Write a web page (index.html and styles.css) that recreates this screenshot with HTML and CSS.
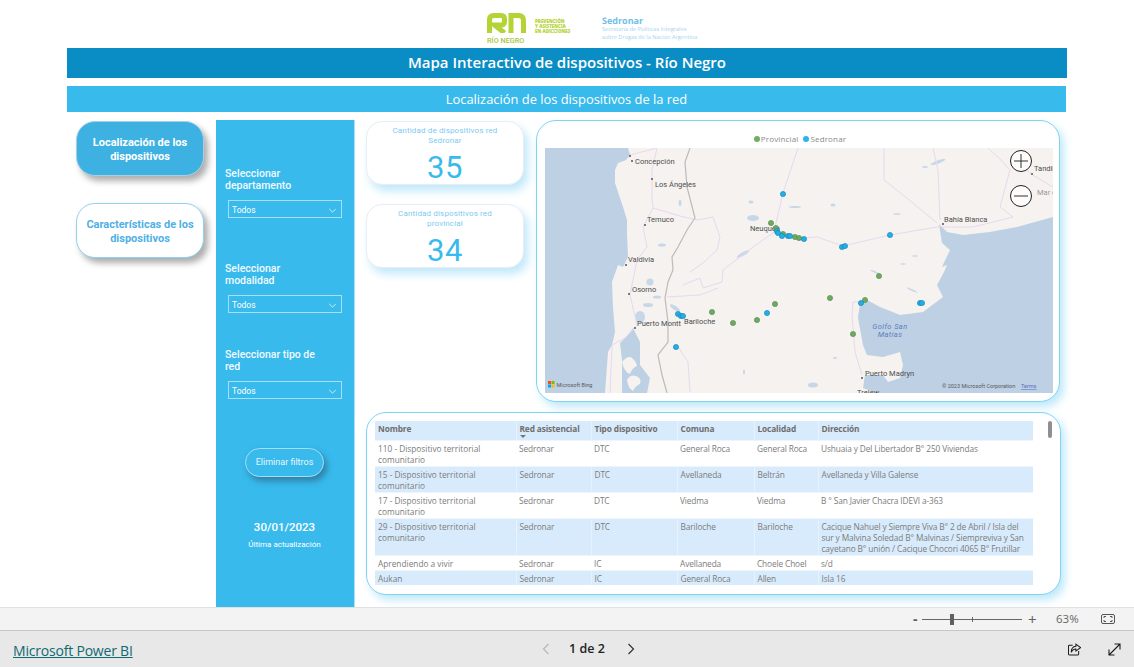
FILE: index.html
```html
<!DOCTYPE html>
<html lang="es">
<head>
<meta charset="utf-8">
<title>Mapa Interactivo de dispositivos - Río Negro</title>
<link rel="stylesheet" href="styles.css">
</head>
<body>
<main class="canvas">
  <header class="logos">
    <div class="rn">
      <svg class="rn-mark" viewBox="0 0 39 20" aria-hidden="true">
        <path d="M2.500 20V7Q2.500 2.500 7 2.500H14Q17.500 2.500 17.500 6V8.500Q17.500 12 14 12H7.500L17.500 20"/>
        <path d="M24 20V2.500H31.500Q36.500 2.500 36.500 7.500V20"/>
      </svg>
      <span class="rn-name">RÍO NEGRO</span>
    </div>
    <div class="rn-tag">PREVENCIÓN<br>Y ASISTENCIA<br>EN ADICCIONES</div>
    <div class="sedronar">
      <strong>Sedronar</strong>
      <span>Secretaría de Políticas Integrales</span>
      <span>sobre Drogas de la Nación Argentina</span>
    </div>
  </header>
  <h1 class="title">Mapa Interactivo de dispositivos - Río Negro</h1>
  <h2 class="subtitle">Localización de los dispositivos de la red</h2>

  <div class="report">
    <nav class="nav">
      <a class="nav-btn active">Localización de los dispositivos</a>
      <a class="nav-btn">Características de los dispositivos</a>
    </nav>

    <aside class="filters">
      <div class="filter">
        <label>Seleccionar<br>departamento</label>
        <div class="select"><span>Todos</span><svg viewBox="0 0 10 6"><path d="M1 1l4 4 4-4"/></svg></div>
      </div>
      <div class="filter">
        <label>Seleccionar<br>modalidad</label>
        <div class="select"><span>Todos</span><svg viewBox="0 0 10 6"><path d="M1 1l4 4 4-4"/></svg></div>
      </div>
      <div class="filter">
        <label>Seleccionar tipo de<br>red</label>
        <div class="select"><span>Todos</span><svg viewBox="0 0 10 6"><path d="M1 1l4 4 4-4"/></svg></div>
      </div>
      <button class="clear">Eliminar filtros</button>
      <div class="date">30/01/2023</div>
      <div class="date-note">Última actualización</div>
    </aside>

    <section class="main">
      <div class="top">
        <div class="kpis">
          <div class="kpi"><p>Cantidad de dispositivos red<br>Sedronar</p><b>35</b></div>
          <div class="kpi"><p>Cantidad dispositivos red<br>provincial</p><b>34</b></div>
        </div>
        <div class="map-card">
          <div class="legend">
            <i class="dot green"></i><span>Provincial</span>
            <i class="dot blue"></i><span>Sedronar</span>
          </div>
          <div class="map">
            <svg class="map-svg" viewBox="545 148 508 245" aria-label="Mapa">
              <rect class="land" x="545" y="148" width="508" height="245"/>
              <path class="sea" d="M545 148H628L630 155L626 160L618 163L615 170L615 183L619 195L623 207L627 220L627 233L628 257L623 267L618 265L612 282L613 308L615 332L612 345L608 352L605 393H545Z"/>
              <path class="sea" d="M633 328L640 342L640 365L650 378L647 393H622L622 360L620 343L628 335Z"/>
              <path class="sea" d="M1053 217L1017 227L990 232L963 235L947 232L942 227L939 224L942 243L950 250L942 267L947 265L944 272L937 285L943 297L923 312L900 315L880 307L867 300L860 303L858 318L863 345L867 355L883 357L900 352L903 365L900 378L888 382L883 375L865 375L863 388L877 393H1053Z"/>
              <path class="land" d="M872 360Q880 356 890 358L888 364L876 366Z"/>
              <g class="land">
                <path d="M622 362Q628 355 632 358T637 366Q632 368 630 374Q624 372 622 362Z"/>
                <path d="M627 380Q630 374 636 376T640 384Q635 386 633 391Q628 388 627 380Z"/>
                <path d="M612 348L620 345L621 393H608Z"/>
              </g>
              <g class="lakes">
                <ellipse cx="753" cy="218" rx="6" ry="3"/><ellipse cx="751" cy="202" rx="2.500" ry="1.500"/>
                <ellipse cx="795" cy="207" rx="6" ry="1"/><ellipse cx="743" cy="254" rx="7" ry="1.800" transform="rotate(-30 743 254)"/>
                <ellipse cx="650" cy="282" rx="3.500" ry="3.500"/><ellipse cx="657" cy="297" rx="4" ry="1.500"/>
                <ellipse cx="648" cy="305" rx="5" ry="2"/><ellipse cx="675" cy="308" rx="6" ry="2" transform="rotate(35 675 308)"/>
                <ellipse cx="640" cy="317" rx="5" ry="6"/><ellipse cx="662" cy="245" rx="4" ry="1.500"/>
                <ellipse cx="680" cy="203" rx="1.500" ry="3"/><ellipse cx="938" cy="162" rx="8" ry="1.500" transform="rotate(-20 938 162)"/>
                <ellipse cx="925" cy="167" rx="3" ry="1"/><ellipse cx="833" cy="205" rx="2.500" ry="1.500"/>
                <ellipse cx="897" cy="214" rx="4" ry=".8"/><ellipse cx="915" cy="256" rx="3" ry=".8"/>
                <ellipse cx="903" cy="264" rx="3" ry=".8"/><ellipse cx="835" cy="358" rx="2" ry="1"/>
                <ellipse cx="813" cy="385" rx="5" ry="2.500"/><ellipse cx="912" cy="290" rx="6" ry=".8" transform="rotate(25 912 290)"/>
                <ellipse cx="875" cy="272" rx="5" ry=".8" transform="rotate(25 875 272)"/><ellipse cx="744" cy="372" rx="1" ry="2.500"/>
              </g>
              <g class="roads">
                <path d="M630 155L657 148M657 148L652 170L652 197L653 208L643 227L647 247L637 260L630 295L637 325L625 338L612 345L610 393"/>
                <path d="M653 208L680 216L697 220L713 217L720 237L717 250L703 263L690 272"/>
                <path d="M798 148L783 193L775 227L773 233L753 247L740 257L723 270L722 282L703 288L700 278L683 285"/>
                <path d="M667 297L700 295L718 288M677 345L688 362L690 392"/>
                <path d="M773 233L800 238L817 237L843 246L890 235L937 227L973 227L1013 217L1000 207L1010 170L1000 159L988 148"/>
                <path d="M933 148L938 170L940 220M884 148V180L913 203L937 223M1010 157L1033 175L1053 187M853 302L852 315L855 352L862 375M853 302H863"/>
              </g>
              <path class="border" d="M690 148L685 162L687 187L695 218L687 230L678 247L672 257L673 270L668 282L665 298L668 322L668 342L658 355L662 375L667 393"/>
              <g class="labels">
                <text x="635" y="164">Concepción</text><text x="655" y="187">Los Ángeles</text>
                <text x="647" y="222">Temuco</text><text x="628" y="262">Valdivia</text>
                <text x="750" y="231">Neuquén</text><text x="944" y="222">Bahía Blanca</text>
                <text x="1034" y="171">Tandil</text><text class="faint" x="1037" y="195">Mar d</text>
                <text x="632" y="292">Osorno</text><text x="637" y="326">Puerto Montt</text>
                <text x="684" y="324">Bariloche</text><text x="865" y="376">Puerto Madryn</text>
                <text x="857" y="395">Trelew</text>
                <text class="gulf" x="890" y="329">Golfo San</text><text class="gulf" x="890" y="337">Matías</text>
              </g>
              <g class="towns">
                <circle cx="630" cy="156" r="1"/><circle cx="632" cy="161" r="1"/><circle cx="652" cy="179" r="1"/>
                <circle cx="645" cy="225" r="1"/><circle cx="626" cy="265" r="1"/><circle cx="629" cy="294" r="1"/>
                <circle cx="635" cy="328" r="1"/><circle cx="1032" cy="174" r="1"/><circle cx="943" cy="224" r="1"/>
                <circle cx="862" cy="378" r="1"/>
              </g>
              <g class="pins-green">
                <circle cx="771" cy="223" r="2.600"/><circle cx="776" cy="228" r="2.600"/><circle cx="783" cy="234" r="2.600"/>
                <circle cx="795" cy="237" r="2.600"/><circle cx="799" cy="238" r="2.600"/><circle cx="712" cy="312" r="2.600"/>
                <circle cx="733" cy="323" r="2.600"/><circle cx="757" cy="320" r="2.600"/><circle cx="775" cy="304" r="2.600"/>
                <circle cx="879" cy="276" r="2.600"/><circle cx="830" cy="298" r="2.600"/><circle cx="865" cy="300" r="2.600"/>
                <circle cx="853" cy="334" r="2.600"/>
              </g>
              <g class="pins-blue">
                <circle cx="783" cy="194" r="2.600"/><circle cx="777" cy="231" r="2.600"/><circle cx="778" cy="233" r="2.600"/>
                <circle cx="782" cy="236" r="2.600"/><circle cx="788" cy="236" r="2.600"/><circle cx="790" cy="236" r="2.600"/>
                <circle cx="804" cy="239" r="2.600"/><circle cx="842" cy="247" r="2.600"/><circle cx="845" cy="246" r="2.600"/>
                <circle cx="890" cy="235" r="2.600"/><circle cx="678" cy="314" r="2.600"/><circle cx="681" cy="316" r="2.600"/>
                <circle cx="683" cy="316" r="2.600"/><circle cx="767" cy="313" r="2.600"/><circle cx="676" cy="347" r="2.600"/>
                <circle cx="861" cy="303" r="2.600"/><circle cx="920" cy="303" r="2.600"/><circle cx="922" cy="303" r="2.600"/>
              </g>
              <g class="zoom-btn">
                <circle cx="1021" cy="161" r="10.500"/><path d="M1014 161H1028M1021 154V168"/>
                <circle cx="1021" cy="196" r="10.500"/><path d="M1014 196H1028"/>
              </g>
              <g>
                <rect x="548" y="381" width="3" height="3" fill="#f25022"/><rect x="551.500" y="381" width="3" height="3" fill="#7fba00"/>
                <rect x="548" y="384.500" width="3" height="3" fill="#00a4ef"/><rect x="551.500" y="384.500" width="3" height="3" fill="#ffb900"/>
                <text class="credit" x="556.500" y="387">Microsoft Bing</text>
                <text class="credit" x="942" y="388">© 2023 Microsoft Corporation</text>
                <text class="credit terms" x="1021" y="388">Terms</text>
              </g>
            </svg>
          </div>
        </div>
      </div>

      <div class="table-card">
        <table class="devices">
          <colgroup>
            <col class="c1"><col class="c2"><col class="c3"><col class="c4"><col class="c5"><col class="c6">
          </colgroup>
          <thead>
            <tr>
              <th>Nombre</th>
              <th class="sorted">Red asistencial</th>
              <th>Tipo dispositivo</th>
              <th>Comuna</th>
              <th>Localidad</th>
              <th>Dirección</th>
            </tr>
          </thead>
          <tbody>
            <tr><td>110 - Dispositivo territorial comunitario</td><td>Sedronar</td><td>DTC</td><td>General Roca</td><td>General Roca</td><td>Ushuaia y Del Libertador B° 250 Viviendas</td></tr>
            <tr><td>15 - Dispositivo territorial comunitario</td><td>Sedronar</td><td>DTC</td><td>Avellaneda</td><td>Beltrán</td><td>Avellaneda y Villa Galense</td></tr>
            <tr><td>17 - Dispositivo territorial comunitario</td><td>Sedronar</td><td>DTC</td><td>Viedma</td><td>Viedma</td><td>B ° San Javier Chacra IDEVI a-363</td></tr>
            <tr><td>29 - Dispositivo territorial comunitario</td><td>Sedronar</td><td>DTC</td><td>Bariloche</td><td>Bariloche</td><td>Cacique Nahuel y Siempre Viva B° 2 de Abril / Isla del sur y Malvina Soledad B° Malvinas / Siempreviva y San cayetano B° unión / Cacique Chocori 4065 B° Frutillar</td></tr>
            <tr><td>Aprendiendo a vivir</td><td>Sedronar</td><td>IC</td><td>Avellaneda</td><td>Choele Choel</td><td>s/d</td></tr>
            <tr><td>Aukan</td><td>Sedronar</td><td>IC</td><td>General Roca</td><td>Allen</td><td>Isla 16</td></tr>
          </tbody>
        </table>
        <div class="scrollbar"></div>
      </div>
    </section>
  </div>
</main>

<div class="zoombar">
  <span class="z-minus">-</span>
  <div class="slider"><i class="tick"></i><i class="thumb"></i></div>
  <span class="z-plus">+</span>
  <span class="z-pct">63%</span>
  <svg class="z-fit" viewBox="0 0 14 10" aria-hidden="true">
    <rect x="0.500" y="0.500" width="13" height="9" rx="1.500"/>
    <path d="M3 4V2.500H5M9 2.500H11V4M11 6V7.500H9M5 7.500H3V6"/>
  </svg>
</div>

<footer class="footer">
  <a class="pbi">Microsoft Power BI</a>
  <div class="pager">
    <svg class="chev off" viewBox="0 0 8 12"><path d="M6.500 1L1.500 6L6.500 11"/></svg>
    <span>1 de 2</span>
    <svg class="chev" viewBox="0 0 8 12"><path d="M1.500 1L6.500 6L1.500 11"/></svg>
  </div>
  <div class="foot-icons">
    <svg class="ficon share" viewBox="0 0 14 13" aria-hidden="true">
      <path d="M5 2H1.500Q.5 2 .5 3V11Q.5 12.500 2 12.500H10Q11.500 12.500 11.500 11V8"/>
      <path d="M8.500 .8L13.500 4.500L8.500 8.200V6Q5 6 3.500 9.500Q3.500 3.500 8.500 3Z"/>
    </svg>
    <svg class="ficon expand" viewBox="0 0 13 13" aria-hidden="true">
      <path d="M1 12L12 1M6.500 1H12V6.500M1 6.500V12H6.500"/>
    </svg>
  </div>
</footer>
</body>
</html>
```
FILE: styles.css
```css
* { box-sizing: border-box; }
html, body { margin: 0; padding: 0; }
body {
  width: 1134px;
  height: 667px;
  overflow: hidden;
  background: #fff;
  font-family: "Open Sans", "Noto Sans", sans-serif;
  display: flex;
  flex-direction: column;
}

/* Report canvas */
.canvas { height: 607px; flex: none; overflow: hidden; background: #fff; }

.logos { height: 48px; padding-left: 487px; display: flex; align-items: flex-start; }
.rn { width: 39px; margin-top: 13px; display: flex; flex-direction: column; }
.rn-mark { width: 39px; height: 20px; display: block; }
.rn-mark path { fill: none; stroke: #b4d335; stroke-width: 5; }
.rn-name { margin-top: 4px; font: 500 7.300px/8px "Roboto", sans-serif; color: #a8c640; white-space: nowrap; }
.rn-tag { margin: 19px 0 0 9px; width: 67px; font: 800 4.500px/5px "Open Sans", sans-serif; color: #b4d335; white-space: nowrap; }
.sedronar { margin-top: 15px; display: flex; flex-direction: column; color: #9fd3ef; font: 400 5.600px/7.500px "Open Sans", sans-serif; text-rendering: geometricPrecision; white-space: nowrap; }
.sedronar strong { font: 700 9px/11px "Open Sans", sans-serif; color: #6fc0ea; }

.title {
  margin: 0 0 0 67px;
  width: 1000px;
  height: 30px;
  background: #0a8dc5;
  color: #fff;
  font: 600 15px/29px "Open Sans", sans-serif;
  text-align: center;
}
.subtitle {
  margin: 8px 0 0 67px;
  width: 999px;
  height: 26px;
  background: #38baed;
  color: #fff;
  font: 400 12.900px/27px "Open Sans", sans-serif;
  text-align: center;
}

.report { margin: 8px 0 0 76px; display: flex; height: 487px; }

/* Page navigation */
.nav { width: 128px; padding-top: 1px; display: flex; flex-direction: column; gap: 27px; flex: none; }
.nav-btn {
  height: 55px;
  border-radius: 19px;
  padding: 3px 8px 0;
  display: flex;
  align-items: center;
  justify-content: center;
  text-align: center;
  font: 700 11px/14px "Roboto", sans-serif;
  background: #fff;
  color: #4fb0e6;
  border: 1px solid #8fd3f1;
  box-shadow: 4px 5px 6px rgba(60, 60, 60, .42);
}
.nav-btn.active { background: #3eb1e3; color: #fff; border-color: #a9cfe2; }

/* Filter column */
.filters {
  width: 139px;
  margin-left: 12px;
  flex: none;
  background: #38baed;
  border-right: 1px solid #a8e0f7;
  padding: 48px 0 0 9px;
  display: flex;
  flex-direction: column;
  color: #fff;
}
.filter { margin-bottom: 45px; }
.filter + .filter { margin-bottom: 36px; }
.filter label { display: block; font: 500 10.500px/12px "Roboto", sans-serif; color: #f2fbff; }
.select {
  width: 114px;
  height: 18px;
  margin: 8px 0 0 3px;
  border: 1px solid #a6e0f7;
  padding: 2px 4px 0 3px;
  display: flex;
  align-items: center;
  justify-content: space-between;
  font: 400 8.500px/14px "Roboto", sans-serif;
}
.select svg { width: 9px; height: 5px; fill: none; stroke: #dff5fd; stroke-width: 1; }
.clear {
  align-self: flex-start;
  margin: 13px 0 0 20px;
  width: 79px;
  height: 29px;
  border-radius: 15px;
  border: 1px solid #a6dff5;
  background: #38baed;
  color: #e8f7fd;
  font: 400 9px/27px "Roboto", sans-serif;
  padding: 0;
  box-shadow: 3px 4px 6px rgba(40, 70, 90, .5);
}
.date { margin: 43px 0 0 0; width: 119px; text-align: center; font: 500 11.500px/14px "Roboto", sans-serif; }
.date-note { margin-top: 5px; width: 119px; text-align: center; font: 400 8px/11px "Roboto", sans-serif; }

/* Main */
.main { margin-left: 11px; width: 695px; flex: none; display: flex; flex-direction: column; gap: 10px; }
.top { display: flex; gap: 12px; height: 282px; }
.kpis { width: 158px; padding-top: 1px; display: flex; flex-direction: column; gap: 19px; flex: none; }
.kpi {
  height: 64px;
  border-radius: 16px;
  border: 1px solid #e8eef3;
  background: #fff;
  box-shadow: 4px 6px 10px #bfe8fa;
  text-align: center;
}
.kpi p { margin: 4px 0 0; font: 400 8px/10px "Roboto", sans-serif; color: #7ccbf2; letter-spacing: .15px; }
.kpi b { display: block; margin-top: 5px; font: 400 31px/34px "Roboto", sans-serif; color: #38baed; letter-spacing: .5px; }

.map-card, .table-card {
  background: #fff;
  border: 1px solid #7fd4f4;
  border-radius: 20px;
  box-shadow: 4px 5px 9px #bfe8fa;
}
.map-card { width: 524px; padding: 0 7px 0 8px; }
.legend {
  height: 27px;
  padding: 9px 0 0 6px;
  display: flex;
  align-items: center;
  justify-content: center;
  font: 400 8px/10px "Open Sans", sans-serif;
  color: #8a8a8a;
  letter-spacing: .15px;
}
.legend span { margin: 0 3px 0 1px; }
.dot { width: 6px; height: 6px; border-radius: 50%; }
.dot.green { background: #70ad66; }
.dot.blue { background: #29b6ef; margin-left: 2px; }
.map { width: 508px; height: 245px; overflow: hidden; }
.map-svg { display: block; width: 508px; height: 245px; }
.land { fill: #f5f2ef; }
.sea { fill: #bdd0e4; }
.lakes { fill: #c6d7e8; }
.roads { fill: none; stroke: #e9d7f0; stroke-width: 1; }
.border { fill: none; stroke: #bdbab8; stroke-width: 1.200; }
.labels text { font: 400 7.500px "Roboto", sans-serif; fill: #4e4e4e; }
.labels .faint { fill: #9a9a9a; }
.labels .gulf { font-style: italic; fill: #5f7fc0; text-anchor: middle; letter-spacing: .4px; }
.towns { fill: #555; }
.pins-green circle { fill: #6fa95f; stroke: #4d8a4a; stroke-width: .6; }
.pins-blue circle { fill: #22aee6; stroke: #1283b5; stroke-width: .6; }
.zoom-btn circle { fill: rgba(255, 255, 255, .75); stroke: #222; stroke-width: 1; }
.zoom-btn path { fill: none; stroke: #333; stroke-width: 1; }
.credit { font: 400 5.500px "Roboto", sans-serif; fill: #5a5a5a; }
.credit.terms { fill: #5a6fc0; text-decoration: underline; }

/* Table */
.table-card { position: relative; width: 695px; height: 183px; padding: 8px 0 0 8px; overflow: hidden; }
.devices { width: 658px; border-collapse: collapse; table-layout: fixed; font: 400 8.300px/11px "Open Sans", sans-serif; letter-spacing: -.12px; color: #7b7b7b; }
.c1 { width: 141px; } .c2 { width: 75px; } .c3 { width: 86px; }
.c4 { width: 77px; } .c5 { width: 64px; } .c6 { width: 215px; }
.devices th {
  height: 19px;
  padding: 0 3px 3px;
  background: #d8ebfc;
  text-align: left;
  font-weight: 700;
  color: #6e6e6e;
  white-space: nowrap;
  border-left: 1px solid #e6f2fd;
}
.devices th.sorted { position: relative; }
.devices th.sorted::after {
  content: "";
  position: absolute;
  left: 3px;
  top: 14px;
  border: 3px solid transparent;
  border-top: 3px solid #777;
  border-bottom: 0;
}
.devices td { padding: 2px 3px 1px; vertical-align: top; border-top: 1px solid #eef5fc; }
.devices td:first-child { letter-spacing: 0; }
.devices tbody tr:nth-child(even) td { background: #d8ebfc; border-left: 1px solid #e6f2fd; }
.devices th:first-child, .devices td:first-child { border-left: 0 !important; }
.scrollbar { position: absolute; left: 681px; top: 8px; width: 4px; height: 17px; border-radius: 2px; background: #8f8f8f; }

/* Zoom bar */
.zoombar {
  height: 24px;
  flex: none;
  background: #f3f3f3;
  border-top: 1px solid #e1e1e1;
  border-bottom: 1px solid #c8c8c8;
  display: flex;
  align-items: center;
  padding-left: 913px;
  color: #5f5f5f;
}
.z-minus { width: 9px; font: 700 14px/14px "Open Sans", sans-serif; }
.slider { position: relative; width: 100px; height: 11px; }
.slider::before { content: ""; position: absolute; left: 0; right: 0; top: 5px; height: 1px; background: #666; }
.thumb { position: absolute; left: 28px; top: 0; width: 4px; height: 11px; background: #606060; }
.tick { position: absolute; left: 50px; top: 3px; width: 1px; height: 5px; background: #666; }
.z-plus { width: 14px; margin-left: 6px; font: 400 15px/14px "Open Sans", sans-serif; }
.z-pct { margin-left: 14px; width: 22px; font: 400 11.500px/14px "Open Sans", sans-serif; color: #666; }
.z-fit { margin-left: 23px; width: 14px; height: 10px; fill: none; stroke: #555; stroke-width: 1; }

/* Footer */
.footer {
  height: 36px;
  flex: none;
  background: #e8e8e8;
  display: flex;
  align-items: center;
  padding-left: 13px;
}
.pbi { width: 120px; margin-top: 3px; font: 400 14px/18px "Open Sans", sans-serif; letter-spacing: -.2px; color: #0f6a72; text-decoration: underline; white-space: nowrap; }
.pager { margin-left: 409px; display: flex; align-items: center; font: 600 12.500px/16px "Open Sans", sans-serif; color: #222; }
.pager span { margin: 0 22px 0 19px; }
.chev { width: 8px; height: 12px; fill: none; stroke: #333; stroke-width: 1.200; }
.chev.off { stroke: #b8b8b8; }
.foot-icons { margin-left: 433px; display: flex; gap: 27px; align-items: center; }
.ficon { width: 13px; height: 13px; fill: none; stroke: #1a1a1a; stroke-width: 1.100; }
```
